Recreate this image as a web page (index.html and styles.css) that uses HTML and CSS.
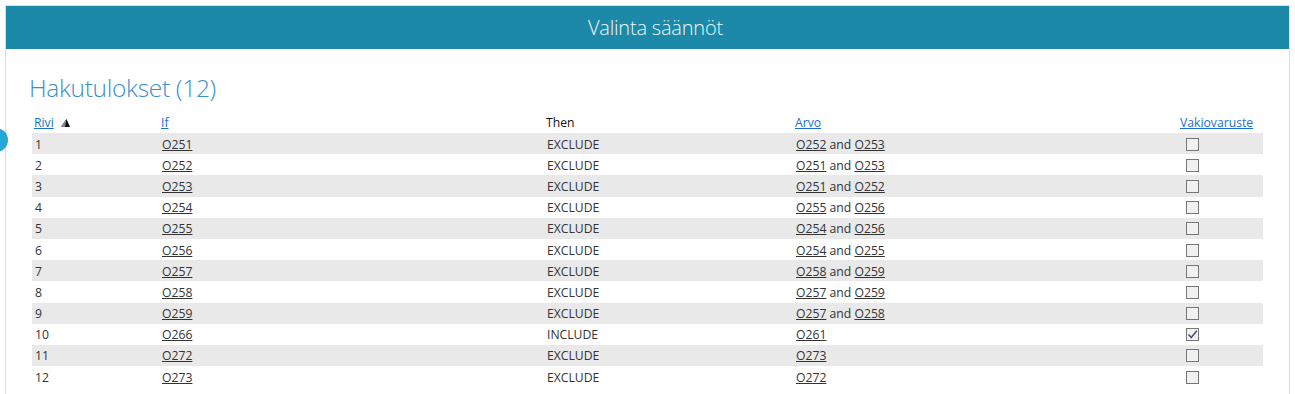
FILE: index.html
```html
<!DOCTYPE html>
<html lang="fi">
<head>
<meta charset="utf-8">
<title>Valinta säännöt</title>
<link rel="stylesheet" href="styles.css">
</head>
<body>
<div class="panel">
  <div class="panel-header">Valinta säännöt</div>
  <div class="panel-body">
    <h2 class="results-title">Hakutulokset (12)</h2>
    <table class="rules">
      <colgroup>
        <col class="c-rivi"><col class="c-if"><col class="c-then"><col class="c-arvo"><col class="c-std">
      </colgroup>
      <thead>
        <tr>
          <th><a href="#">Rivi</a><svg class="sort" width="9" height="8" viewBox="0 0 9 8"><polygon points="0,8 5.5,0 9,8" fill="#111"/><polygon points="0,8 5.5,0 4,8" fill="#888"/></svg></th>
          <th><a href="#">If</a></th>
          <th>Then</th>
          <th><a href="#">Arvo</a></th>
          <th><a href="#">Vakiovaruste</a></th>
        </tr>
      </thead>
      <tbody>
        <tr><td>1</td><td><a href="#">O251</a></td><td>EXCLUDE</td><td><a href="#">O252</a> and <a href="#">O253</a></td><td><span class="cb"></span></td></tr>
        <tr><td>2</td><td><a href="#">O252</a></td><td>EXCLUDE</td><td><a href="#">O251</a> and <a href="#">O253</a></td><td><span class="cb"></span></td></tr>
        <tr><td>3</td><td><a href="#">O253</a></td><td>EXCLUDE</td><td><a href="#">O251</a> and <a href="#">O252</a></td><td><span class="cb"></span></td></tr>
        <tr><td>4</td><td><a href="#">O254</a></td><td>EXCLUDE</td><td><a href="#">O255</a> and <a href="#">O256</a></td><td><span class="cb"></span></td></tr>
        <tr><td>5</td><td><a href="#">O255</a></td><td>EXCLUDE</td><td><a href="#">O254</a> and <a href="#">O256</a></td><td><span class="cb"></span></td></tr>
        <tr><td>6</td><td><a href="#">O256</a></td><td>EXCLUDE</td><td><a href="#">O254</a> and <a href="#">O255</a></td><td><span class="cb"></span></td></tr>
        <tr><td>7</td><td><a href="#">O257</a></td><td>EXCLUDE</td><td><a href="#">O258</a> and <a href="#">O259</a></td><td><span class="cb"></span></td></tr>
        <tr><td>8</td><td><a href="#">O258</a></td><td>EXCLUDE</td><td><a href="#">O257</a> and <a href="#">O259</a></td><td><span class="cb"></span></td></tr>
        <tr><td>9</td><td><a href="#">O259</a></td><td>EXCLUDE</td><td><a href="#">O257</a> and <a href="#">O258</a></td><td><span class="cb"></span></td></tr>
        <tr><td>10</td><td><a href="#">O266</a></td><td>INCLUDE</td><td><a href="#">O261</a></td><td><span class="cb checked"><svg width="11" height="11" viewBox="0 0 11 11"><path d="M1.5 5.5 L4.3 8.5 L9.8 1.8" fill="none" stroke="#46557a" stroke-width="1.6"/></svg></span></td></tr>
        <tr><td>11</td><td><a href="#">O272</a></td><td>EXCLUDE</td><td><a href="#">O273</a></td><td><span class="cb"></span></td></tr>
        <tr><td>12</td><td><a href="#">O273</a></td><td>EXCLUDE</td><td><a href="#">O272</a></td><td><span class="cb"></span></td></tr>
      </tbody>
    </table>
  </div>
</div>
<div class="side-dot"></div>
</body>
</html>
```
FILE: styles.css
```css
html, body {
  margin: 0;
  padding: 0;
  background: #fff;
  font-family: "Open Sans", "Noto Sans", "Liberation Sans", sans-serif;
  color: #333;
}

.panel {
  margin: 5px 5px 0 5px;
  border: 1px solid #dedede;
  border-bottom: none;
  height: 389px;
  box-sizing: border-box;
}

.panel-header {
  background: #1d89a8;
  color: #eef5f8;
  height: 43px;
  display: flex;
  align-items: center;
  justify-content: center;
  padding-left: 16px;
  font-size: 20px;
  font-weight: 300;
  letter-spacing: -0.2px;
}

.panel-body {
  padding: 0 26px;
}

.results-title {
  margin: 21px 0 6px -3px;
  font-size: 24.5px;
  line-height: 36px;
  font-weight: 300;
  color: #3a8fd1;
  letter-spacing: -0.3px;
}

.rules {
  width: 100%;
  border-collapse: collapse;
  table-layout: fixed;
  font-size: 12.2px;
}

.c-rivi { width: 127px; }
.c-if { width: 385px; }
.c-then { width: 249px; }
.c-arvo { width: 385px; }
.c-std { width: 85px; }

.rules th {
  text-align: left;
  font-weight: normal;
  color: #111;
  height: 21px;
  padding: 0 2px;
  vertical-align: middle;
  white-space: nowrap;
}

.rules th a {
  color: #1a6fd0;
  text-decoration: underline;
}

.rules .sort {
  margin-left: 7px;
  vertical-align: 0;
}

.rules td {
  height: 20.2px;
  padding: 1px 3px 0;
  vertical-align: middle;
  white-space: nowrap;
}

.rules td a {
  color: #333;
  text-decoration: underline;
}

.rules tbody tr:nth-child(odd) {
  background: #e9e9e9;
}

.cb {
  display: block;
  width: 13px;
  height: 13px;
  box-sizing: border-box;
  border: 1px solid #767676;
  background: #f1f1f1;
  margin-left: 5px;
  position: relative;
}

.cb svg {
  position: absolute;
  left: 0;
  top: 0;
}

.side-dot {
  position: absolute;
  left: -16px;
  top: 128px;
  width: 24px;
  height: 24px;
  border-radius: 50%;
  background: #25a7d8;
}
```
